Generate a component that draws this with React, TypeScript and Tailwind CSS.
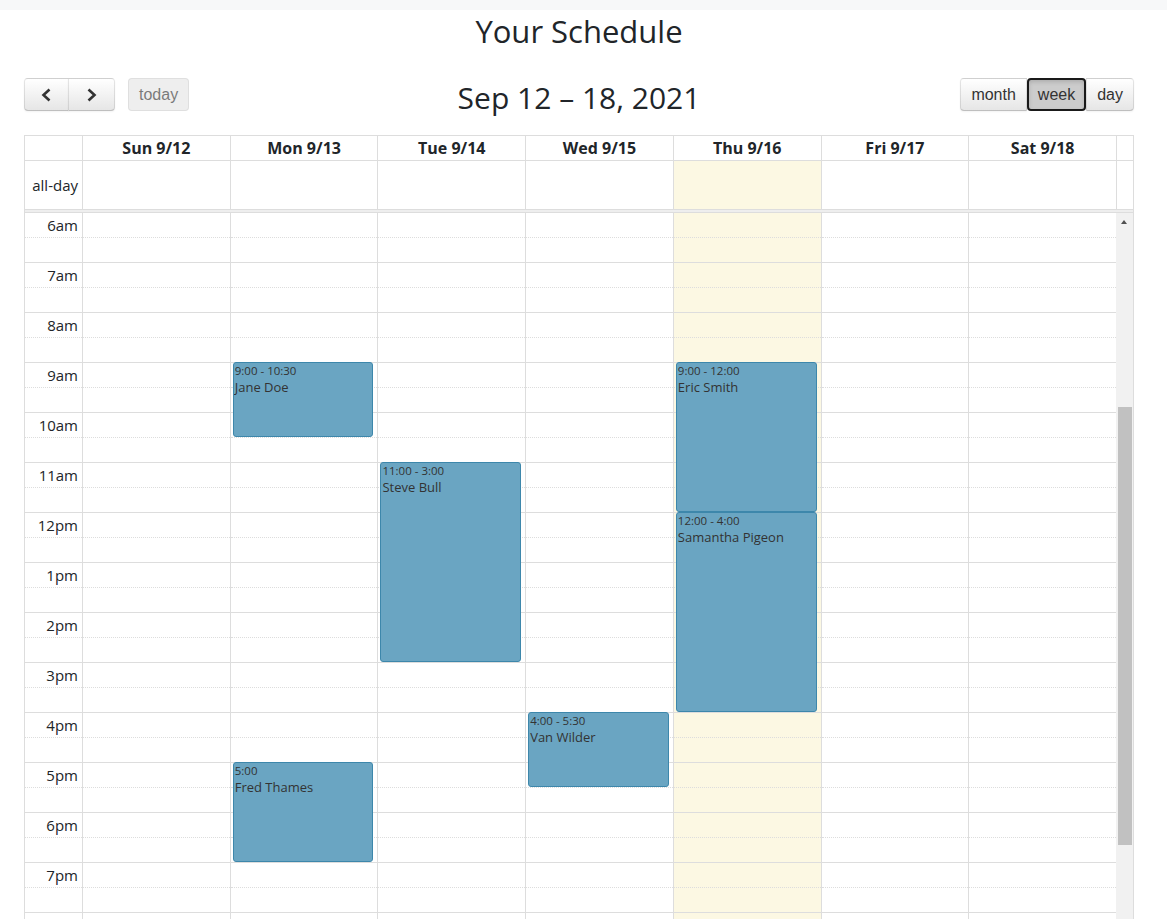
import React from "react";

type CalEvent = {
  day: number;
  start: number;
  end: number;
  time: string;
  title: string;
};

const days = ["Sun 9/12", "Mon 9/13", "Tue 9/14", "Wed 9/15", "Thu 9/16", "Fri 9/17", "Sat 9/18"];
const TODAY = 4;
const FIRST_HOUR = 6;
const LAST_HOUR = 20;
const HOUR_PX = 50;

const events: CalEvent[] = [
  { day: 1, start: 9, end: 10.5, time: "9:00 - 10:30", title: "Jane Doe" },
  { day: 1, start: 17, end: 19, time: "5:00", title: "Fred Thames" },
  { day: 2, start: 11, end: 15, time: "11:00 - 3:00", title: "Steve Bull" },
  { day: 3, start: 16, end: 17.5, time: "4:00 - 5:30", title: "Van Wilder" },
  { day: 4, start: 9, end: 12, time: "9:00 - 12:00", title: "Eric Smith" },
  { day: 4, start: 12, end: 16, time: "12:00 - 4:00", title: "Samantha Pigeon" },
];

const hours: number[] = [];
for (let h = FIRST_HOUR; h < LAST_HOUR; h++) hours.push(h);

const hourLabel = (h: number) => (h === 12 ? "12pm" : h > 12 ? `${h - 12}pm` : `${h}am`);

const cols = "grid grid-cols-[57px_repeat(7,minmax(0,1fr))_17px]";

const btn =
  "h-[33px] px-[10px] font-['Liberation_Sans',Arial,sans-serif] text-[16px] text-[#333] border border-black/10 border-b-black/25 bg-linear-to-b from-white to-[#e6e6e6] shadow-[inset_0_1px_0_rgba(255,255,255,0.2),0_1px_2px_rgba(0,0,0,0.05)]";

function Chevron({ dir }: { dir: "left" | "right" }) {
  return (
    <svg width="11" height="14" viewBox="0 0 11 14" className="mx-auto">
      <polyline
        points={dir === "left" ? "8.5,1.5 2.5,7 8.5,12.5" : "2.5,1.5 8.5,7 2.5,12.5"}
        fill="none"
        stroke="#333"
        strokeWidth="2.6"
      />
    </svg>
  );
}

function Toolbar() {
  return (
    <div className="mt-[26px] grid h-[33px] grid-cols-[1fr_auto_1fr] items-start">
      <div className="flex items-center">
        <button className={`${btn} w-[45px] rounded-l-[4px]`}>
          <Chevron dir="left" />
        </button>
        <button className={`${btn} -ml-px w-[47px] rounded-r-[4px]`}>
          <Chevron dir="right" />
        </button>
        <button className="ml-[13px] h-[33px] rounded-[4px] border border-black/10 bg-[#e6e6e6] px-[10px] font-['Liberation_Sans',Arial,sans-serif] text-[16px] text-[#333] opacity-65">
          today
        </button>
      </div>
      <h2 className="h-[33px] text-[30px] font-medium leading-[39px]">Sep 12 – 18, 2021</h2>
      <div className="flex items-center justify-end">
        <button className={`${btn} rounded-l-[4px]`}>month</button>
        <button className="h-[33px] rounded-[4px] border-2 border-[#1a1a1a] bg-[#cccccc] px-[9px] font-['Liberation_Sans',Arial,sans-serif] text-[16px] text-[#333] shadow-[inset_0_2px_4px_rgba(0,0,0,0.15)]">
          week
        </button>
        <button className={`${btn} rounded-r-[4px]`}>day</button>
      </div>
    </div>
  );
}

function DayColumn({ index }: { index: number }) {
  const dayEvents = events.filter((e) => e.day === index);
  return (
    <div className={`relative border-l border-[#ddd] ${index === TODAY ? "bg-[#fcf8e3]" : ""}`}>
      {hours.map((h) => (
        <div key={h}>
          <div className="h-[25px] border-b border-dotted border-[#ddd]" />
          <div className="h-[25px] border-b border-[#ddd]" />
        </div>
      ))}
      <div className="h-[25px] border-b border-dotted border-[#ddd]" />
      {dayEvents.map((e) => (
        <div
          key={e.title}
          className="absolute left-[2px] right-[4px] overflow-hidden rounded-[3px] border border-[#3d87ab] bg-[#6aa5c2] px-[1px] text-[#333]"
          style={{
            top: (e.start - FIRST_HOUR) * HOUR_PX - 1,
            height: (e.end - e.start) * HOUR_PX,
          }}
        >
          <div className="text-[11.5px] leading-[15px]">{e.time}</div>
          <div className="text-[13px] leading-[18px]">{e.title}</div>
        </div>
      ))}
    </div>
  );
}

function Calendar() {
  return (
    <div className="mt-[24px] border border-[#ddd]">
      <div className={`${cols} h-[25px] border-b border-[#ddd]`}>
        <div />
        {days.map((d) => (
          <div key={d} className="border-l border-[#ddd] text-center text-[16px] font-bold leading-[24px]">
            {d}
          </div>
        ))}
        <div className="border-l border-[#ddd]" />
      </div>

      <div className={`${cols} h-[48px]`}>
        <div className="flex items-center justify-end pr-[4px] text-[15px]">all-day</div>
        {days.map((d, i) => (
          <div key={d} className={`border-l border-[#ddd] ${i === TODAY ? "bg-[#fcf8e3]" : ""}`} />
        ))}
        <div className="border-l border-[#ddd]" />
      </div>

      <div className="h-[4px] border-y border-[#ddd] bg-[#eee]" />

      <div className={`${cols} h-[706px] overflow-hidden`}>
        <div>
          {hours.map((h) => (
            <div key={h}>
              <div className="flex h-[25px] items-center justify-end border-b border-dotted border-[#ddd] pr-[4px] text-[15px]">
                {hourLabel(h)}
              </div>
              <div className="h-[25px] border-b border-[#ddd]" />
            </div>
          ))}
          <div className="h-[25px] border-b border-dotted border-[#ddd]" />
        </div>
        {days.map((d, i) => (
          <DayColumn key={d} index={i} />
        ))}
        <div className="relative bg-[#f1f1f1]">
          <div className="flex justify-center pt-[7px]">
            <div className="h-0 w-0 border-x-[3.5px] border-b-[4px] border-x-transparent border-b-[#505050]" />
          </div>
          <div className="absolute left-[2px] top-[194px] h-[438px] w-[14px] bg-[#c1c1c1]" />
        </div>
      </div>
    </div>
  );
}

export default function App() {
  return (
    <div className="h-[919px] overflow-hidden bg-white font-['Open_Sans','Noto_Sans',sans-serif] text-[#212529]">
      <div className="h-[10px] bg-[#f7f8f9]" />
      <div className="ml-[24px] w-[1110px]">
        <h1 className="text-center text-[31px] font-medium leading-[42px]">Your Schedule</h1>
        <Toolbar />
        <Calendar />
      </div>
    </div>
  );
}
